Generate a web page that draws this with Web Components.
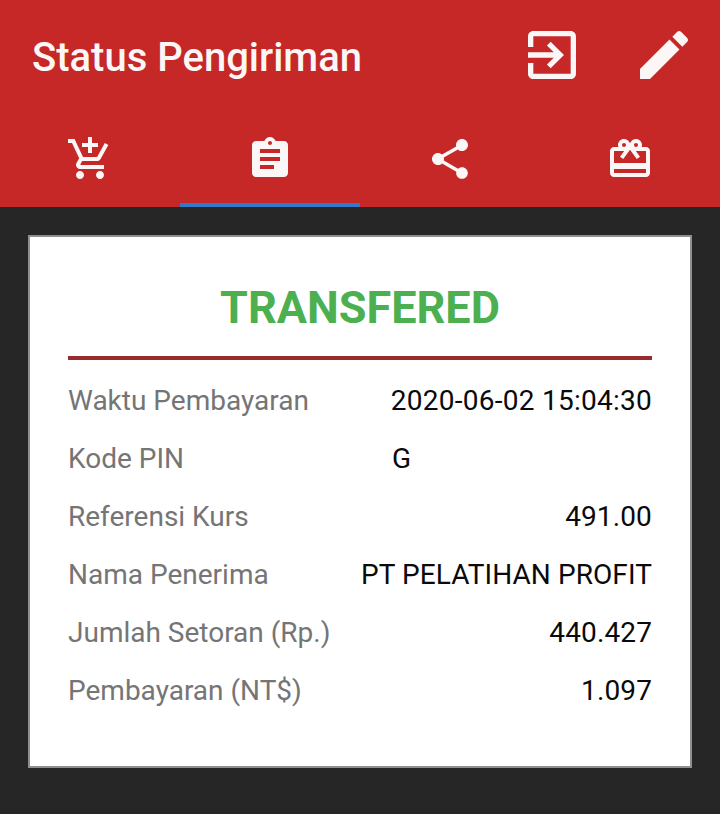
<!DOCTYPE html>
<html lang="id"><head><meta charset="utf-8"><title>Status Pengiriman</title>
<style>html,body{margin:0;padding:0;background:#262626;height:100%}body{font-family:Roboto,"Liberation Sans",sans-serif;width:720px;height:814px;overflow:hidden}</style>
</head><body>
<ship-screen>
  <app-bar title="Status Pengiriman">
    <m-icon name="exit" size="64"></m-icon>
    <m-icon name="edit" size="64"></m-icon>
  </app-bar>
  <tab-strip>
    <tab-item><m-icon name="cart" size="48"></m-icon></tab-item>
    <tab-item active><m-icon name="assignment" size="48"></m-icon></tab-item>
    <tab-item><m-icon name="share" size="48"></m-icon></tab-item>
    <tab-item><m-icon name="gift" size="48"></m-icon></tab-item>
  </tab-strip>
  <status-card status="TRANSFERED">
    <info-row label="Waktu Pembayaran" style="--ls:.26px">2020-06-02 15:04:30</info-row>
    <info-row label="Kode PIN" masked>G</info-row>
    <info-row label="Referensi Kurs">491.00</info-row>
    <info-row label="Nama Penerima" style="--ls:.08px">PT PELATIHAN PROFIT</info-row>
    <info-row label="Jumlah Setoran (Rp.)">440.427</info-row>
    <info-row label="Pembayaran (NT$)">1.097</info-row>
  </status-card>
</ship-screen>
<script>
const ICONS={
exit:"M10.09 15.59L11.5 17l5-5-5-5-1.41 1.41L12.67 11H3v2h9.67l-2.58 2.59zM19 3H5c-1.11 0-2 .9-2 2v4h2V5h14v14H5v-4H3v4c0 1.1.89 2 2 2h14c1.1 0 2-.9 2-2V5c0-1.1-.9-2-2-2z",
edit:"M3 17.25V21h3.75L17.81 9.94l-3.75-3.75L3 17.25zM20.71 7.04c.39-.39.39-1.02 0-1.41l-2.34-2.34c-.39-.39-1.02-.39-1.41 0l-1.83 1.83 3.75 3.75 1.83-1.83z",
cart:"M11 9h2V6h3V4h-3V1h-2v3H8v2h3v3zm-4 9c-1.1 0-1.99.9-1.99 2S5.9 22 7 22s2-.9 2-2-.9-2-2-2zm10 0c-1.1 0-1.99.9-1.99 2s.89 2 1.99 2 2-.9 2-2-.9-2-2-2zm-9.83-3.25l.03-.12.9-1.63h7.45c.75 0 1.41-.41 1.75-1.03l3.86-7.01L19.42 4h-.01l-1.1 2-2.76 5H8.53l-.13-.27L6.16 6l-.95-2-.94-2H1v2h2l3.6 7.59-1.35 2.45c-.16.28-.25.61-.25.96 0 1.1.9 2 2 2h12v-2H7.42c-.13 0-.25-.11-.25-.25z",
assignment:"M19 3h-4.18C14.4 1.84 13.3 1 12 1c-1.3 0-2.4.84-2.82 2H5c-1.1 0-2 .9-2 2v14c0 1.1.9 2 2 2h14c1.1 0 2-.9 2-2V5c0-1.1-.9-2-2-2zm-7 0c.55 0 1 .45 1 1s-.45 1-1 1-1-.45-1-1 .45-1 1-1zm2 14H7v-2h7v2zm3-4H7v-2h10v2zm0-4H7V7h10v2z",
share:"M18 16.08c-.76 0-1.44.3-1.96.77L8.91 12.7c.05-.23.09-.46.09-.7s-.04-.47-.09-.7l7.05-4.11c.54.5 1.25.81 2.04.81 1.66 0 3-1.34 3-3s-1.34-3-3-3-3 1.34-3 3c0 .24.04.47.09.7L8.04 9.81C7.5 9.31 6.79 9 6 9c-1.66 0-3 1.34-3 3s1.34 3 3 3c.79 0 1.5-.31 2.04-.81l7.12 4.16c-.05.21-.08.43-.08.65 0 1.61 1.31 2.92 2.92 2.92 1.61 0 2.92-1.31 2.92-2.92s-1.31-2.92-2.92-2.92z",
gift:"M20 6h-2.18c.11-.31.18-.65.18-1 0-1.66-1.34-3-3-3-1.05 0-1.96.54-2.5 1.35l-.5.67-.5-.68C10.96 2.54 10.05 2 9 2 7.34 2 6 3.34 6 5c0 .35.07.69.18 1H4c-1.11 0-1.99.89-1.99 2L2 19c0 1.11.89 2 2 2h16c1.11 0 2-.89 2-2V8c0-1.11-.89-2-2-2zm-5-2c.55 0 1 .45 1 1s-.45 1-1 1-1-.45-1-1 .45-1 1-1zM9 4c.55 0 1 .45 1 1s-.45 1-1 1-1-.45-1-1 .45-1 1-1zm11 15H4v-2h16v2zm0-5H4V8h5.08L7 10.83 8.62 12 11 8.76l1-1.36 1 1.36L15.38 12 17 10.83 14.92 8H20v6z"};
function def(tag,html){customElements.define(tag,class extends HTMLElement{
  connectedCallback(){if(this.shadowRoot)return;const r=this.attachShadow({mode:"open"});r.innerHTML=typeof html==="function"?html(this):html;}
});}
def("m-icon",el=>{const s=el.getAttribute("size")||48;return `<style>:host{display:block;width:${s}px;height:${s}px;color:#fbf7f6}svg{display:block;width:100%;height:100%;fill:currentColor}</style><svg viewBox="0 0 24 24"><path d="${ICONS[el.getAttribute("name")]}"/></svg>`});
def("ship-screen",`<style>:host{display:flex;flex-direction:column;width:720px;height:814px;background:#262626}</style><slot></slot>`);
def("app-bar",el=>`<style>:host{display:flex;align-items:center;height:112px;box-sizing:border-box;background:#c62828;padding:0 24px 2px 32px}
h1{margin:0;flex:1;padding-top:5px;font:500 40px/1 Roboto,sans-serif;color:#fbf7f6}
.acts{display:flex;gap:48px}</style><h1>${el.getAttribute("title")}</h1><div class="acts"><slot></slot></div>`);
def("tab-strip",`<style>:host{display:grid;grid-template-columns:repeat(4,1fr);height:95px;background:#c62828}</style><slot></slot>`);
def("tab-item",el=>`<style>:host{display:flex;justify-content:center;align-items:center;box-sizing:border-box;padding-top:3px;height:95px;border-bottom:4px solid ${el.hasAttribute("active")?"#3279cb":"transparent"}}</style><slot></slot>`);
def("status-card",el=>`<style>:host{display:block;box-sizing:border-box;width:664px;height:533px;margin:28px 28px 0;background:#fff;border:2px solid #8f8f8f;padding:0 38px}
h2{margin:0;height:123px;box-sizing:border-box;padding-top:46px;text-align:center;font:700 45px/50px Roboto,sans-serif;color:#4caf50;border-bottom:4px solid #982b2b}
.rows{padding-top:12px}</style><h2>${el.getAttribute("status")}</h2><div class="rows"><slot></slot></div>`);
def("info-row",el=>`<style>:host{display:flex;justify-content:space-between;align-items:center;height:58px;font:400 28px/58px Roboto,sans-serif}
.l{color:#757575}.v{color:#0a0a0a;letter-spacing:var(--ls,.13px);${el.hasAttribute("masked")?"width:260px;text-align:left;":"text-align:right;"}}</style><span class="l">${el.getAttribute("label")}</span><span class="v"><slot></slot></span>`);
</script>
</body></html>
